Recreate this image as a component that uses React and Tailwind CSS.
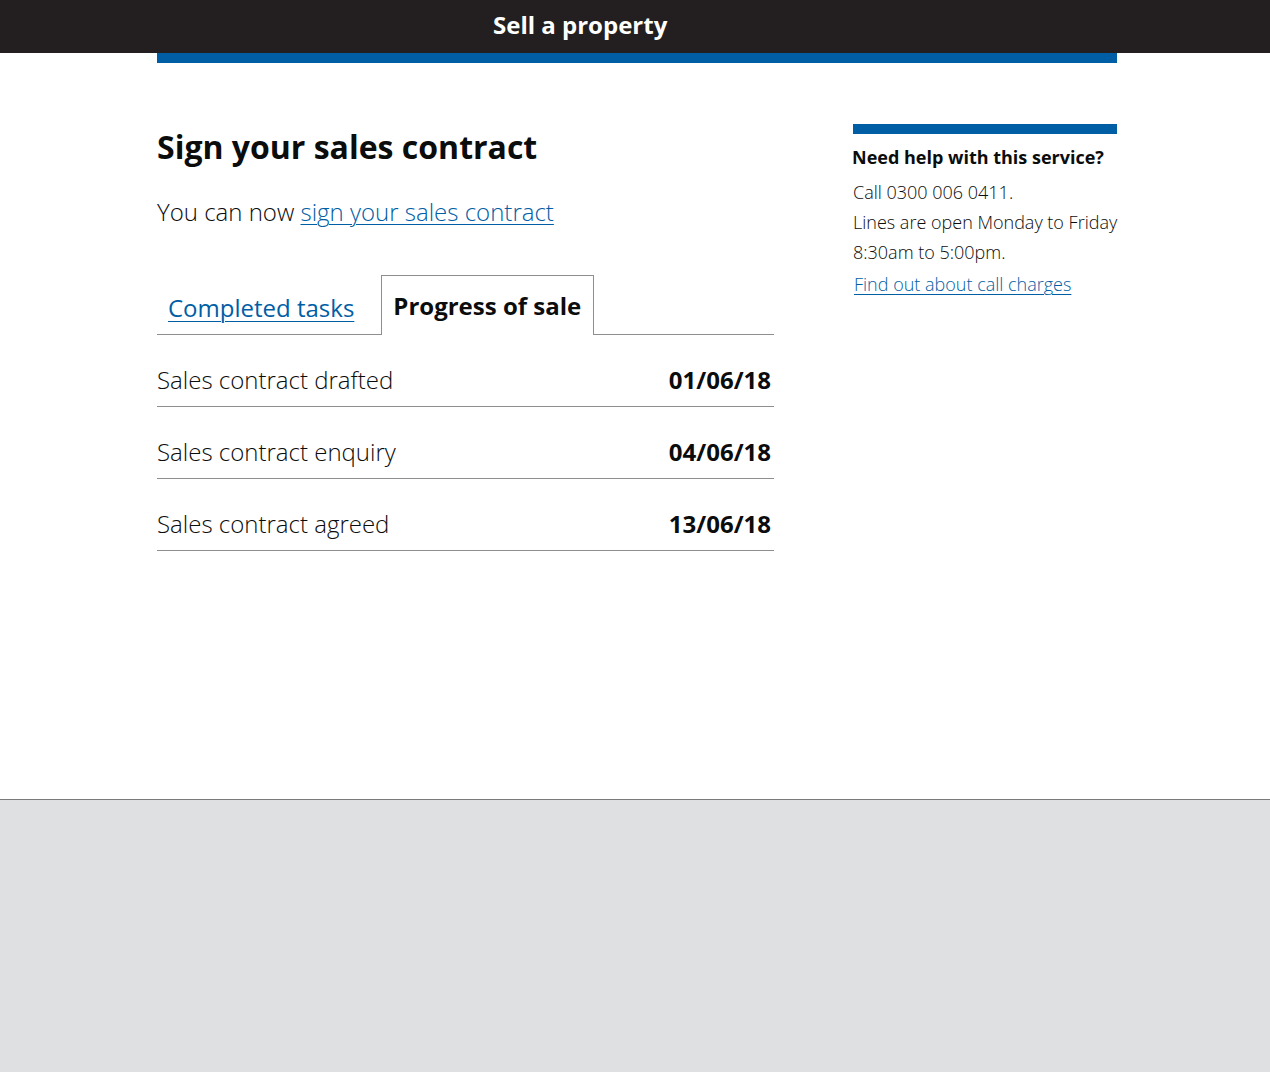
const rows = [
  { label: "Sales contract drafted", date: "01/06/18" },
  { label: "Sales contract enquiry", date: "04/06/18" },
  { label: "Sales contract agreed", date: "13/06/18" },
];

const App = () => {
  return (
    <div className="min-h-screen bg-white text-[#0b0c0c] font-['Open_Sans',sans-serif]">
      <header className="bg-[#231f20]">
        <div className="ml-[157px] w-[960px] h-[53px] pt-[10px]">
          <span className="block pl-[336px] text-[24px] leading-[30px] font-bold text-white">Sell a property</span>
        </div>
      </header>

      <main className="ml-[157px] w-[960px] min-h-[746px]">
        <div className="h-[10px] bg-[#005ea5]" />

        <div className="flex justify-between pt-[61px]">
          <div className="w-[617px]">
            <h1 className="mt-[3px] text-[32px] leading-[40px] font-bold">Sign your sales contract</h1>
            <p className="mt-[30px] text-[24px] leading-[30px] font-light">
              You can now{" "}
              <a href="#" className="text-[#005ea5] underline underline-offset-[3px] decoration-1">
                sign your sales contract
              </a>
            </p>

            <div className="mt-[48px] flex items-end border-b border-[#8e8e8e]">
              <a
                href="#"
                className="px-[11px] pb-[11px] text-[24px] leading-[30px] text-[#005ea5] underline underline-offset-[4px] decoration-1"
              >
                Completed tasks
              </a>
              <div className="ml-[16px] -mb-px border border-b-0 border-[#8e8e8e] bg-white pl-[11px] pr-[12px] pt-[15px] pb-[14px] text-[24px] leading-[30px] font-bold">
                Progress of sale
              </div>
            </div>

            <div>
              {rows.map((row) => (
                <div
                  key={row.label}
                  className="flex items-center justify-between border-b border-[#8e8e8e] pt-[30px] pb-[11px] pr-[3px] text-[24px] leading-[30px]"
                >
                  <span className="font-light">{row.label}</span>
                  <span className="font-bold">{row.date}</span>
                </div>
              ))}
            </div>
          </div>

          <aside className="w-[264px]">
            <div className="h-[10px] bg-[#005ea5]" />
            <h2 className="mt-[8px] -ml-px whitespace-nowrap text-[18px] leading-[30px] font-bold">Need help with this service?</h2>
            <div className="mt-[5px] whitespace-nowrap text-[18px] leading-[30px] font-light">
              <p>Call 0300 006 0411.</p>
              <p>Lines are open Monday to Friday</p>
              <p>8:30am to 5:00pm.</p>
            </div>
            <a
              href="#"
              className="mt-[2px] ml-px block whitespace-nowrap text-[18px] leading-[30px] font-light text-[#005ea5] underline underline-offset-[3px] decoration-1"
            >
              Find out about call charges
            </a>
          </aside>
        </div>
      </main>

      <footer className="h-[273px] border-t border-[#7a7a7a] bg-[#dee0e2]" />
    </div>
  );
};

export default App;
